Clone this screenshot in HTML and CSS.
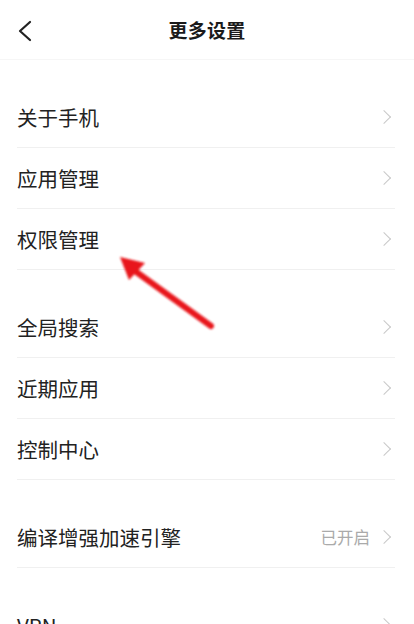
FILE: index.html
```html
<!DOCTYPE html>
<html lang="zh-CN">
<head>
<meta charset="utf-8">
<link rel="stylesheet" href="styles.css">
</head>
<body>
<div class="page">
  <header class="topbar">
    <svg class="back" width="16" height="22" viewBox="0 0 16 22"><path d="M13 2 L3 11 L13 20" fill="none" stroke="#222" stroke-width="2.2" stroke-linecap="round" stroke-linejoin="round"/></svg>
    <h1 class="title">更多设置</h1>
  </header>
  <section class="group">
    <div class="row"><span class="label">关于手机</span><span class="chev"></span></div>
    <div class="row"><span class="label">应用管理</span><span class="chev"></span></div>
    <div class="row"><span class="label">权限管理</span><span class="chev"></span></div>
  </section>
  <section class="group">
    <div class="row"><span class="label">全局搜索</span><span class="chev"></span></div>
    <div class="row"><span class="label">近期应用</span><span class="chev"></span></div>
    <div class="row"><span class="label">控制中心</span><span class="chev"></span></div>
  </section>
  <section class="group">
    <div class="row"><span class="label">编译增强加速引擎</span><span class="value">已开启</span><span class="chev"></span></div>
  </section>
  <section class="group">
    <div class="row"><span class="label">VPN</span><span class="chev"></span></div>
  </section>
  <svg class="arrow" width="120" height="90" viewBox="0 0 120 90">
    <defs>
      <filter id="sh" x="-20%" y="-20%" width="140%" height="140%"><feGaussianBlur stdDeviation="0.8"/></filter>
    </defs>
    <g filter="url(#sh)">
      <line x1="96" y1="71" x2="20" y2="16" stroke="#e8141a" stroke-width="6" stroke-linecap="round"/>
      <polygon points="5,2 30,8 14,25" fill="#e8141a"/>
    </g>
  </svg>
</div>
</body>
</html>
```
FILE: styles.css
```css
* { box-sizing: border-box; }
html, body { margin: 0; padding: 0; background: #fff; }
body { font-family: "Noto Sans CJK SC", "Noto Sans", sans-serif; color: #222; }
.page { position: relative; width: 414px; height: 624px; overflow: hidden; }
.topbar {
  height: 60px;
  display: flex;
  align-items: center;
  justify-content: center;
  position: relative;
  border-bottom: 1px solid #f6f6f6;
}
.back { position: absolute; left: 17px; top: 20px; }
.title { margin: 0; font-size: 19px; font-weight: 700; color: #1a1a1a; letter-spacing: 0.3px; }
.group { margin-top: 27px; }
.row {
  height: 61px;
  margin: 0 19px 0 17px;
  display: flex;
  align-items: center;
  border-bottom: 1px solid #f0f0f0;
}
.label { flex: 1; font-size: 20.5px; color: #222; }
.value { font-size: 16.5px; color: #aaa; margin-right: 9px; }
.chev {
  width: 10px; height: 10px;
  border-top: 1.3px solid #c8c8c8;
  border-right: 1.3px solid #c8c8c8;
  transform: rotate(45deg);
  margin-right: 6px;
}
.arrow { position: absolute; left: 115px; top: 255px; }
```
